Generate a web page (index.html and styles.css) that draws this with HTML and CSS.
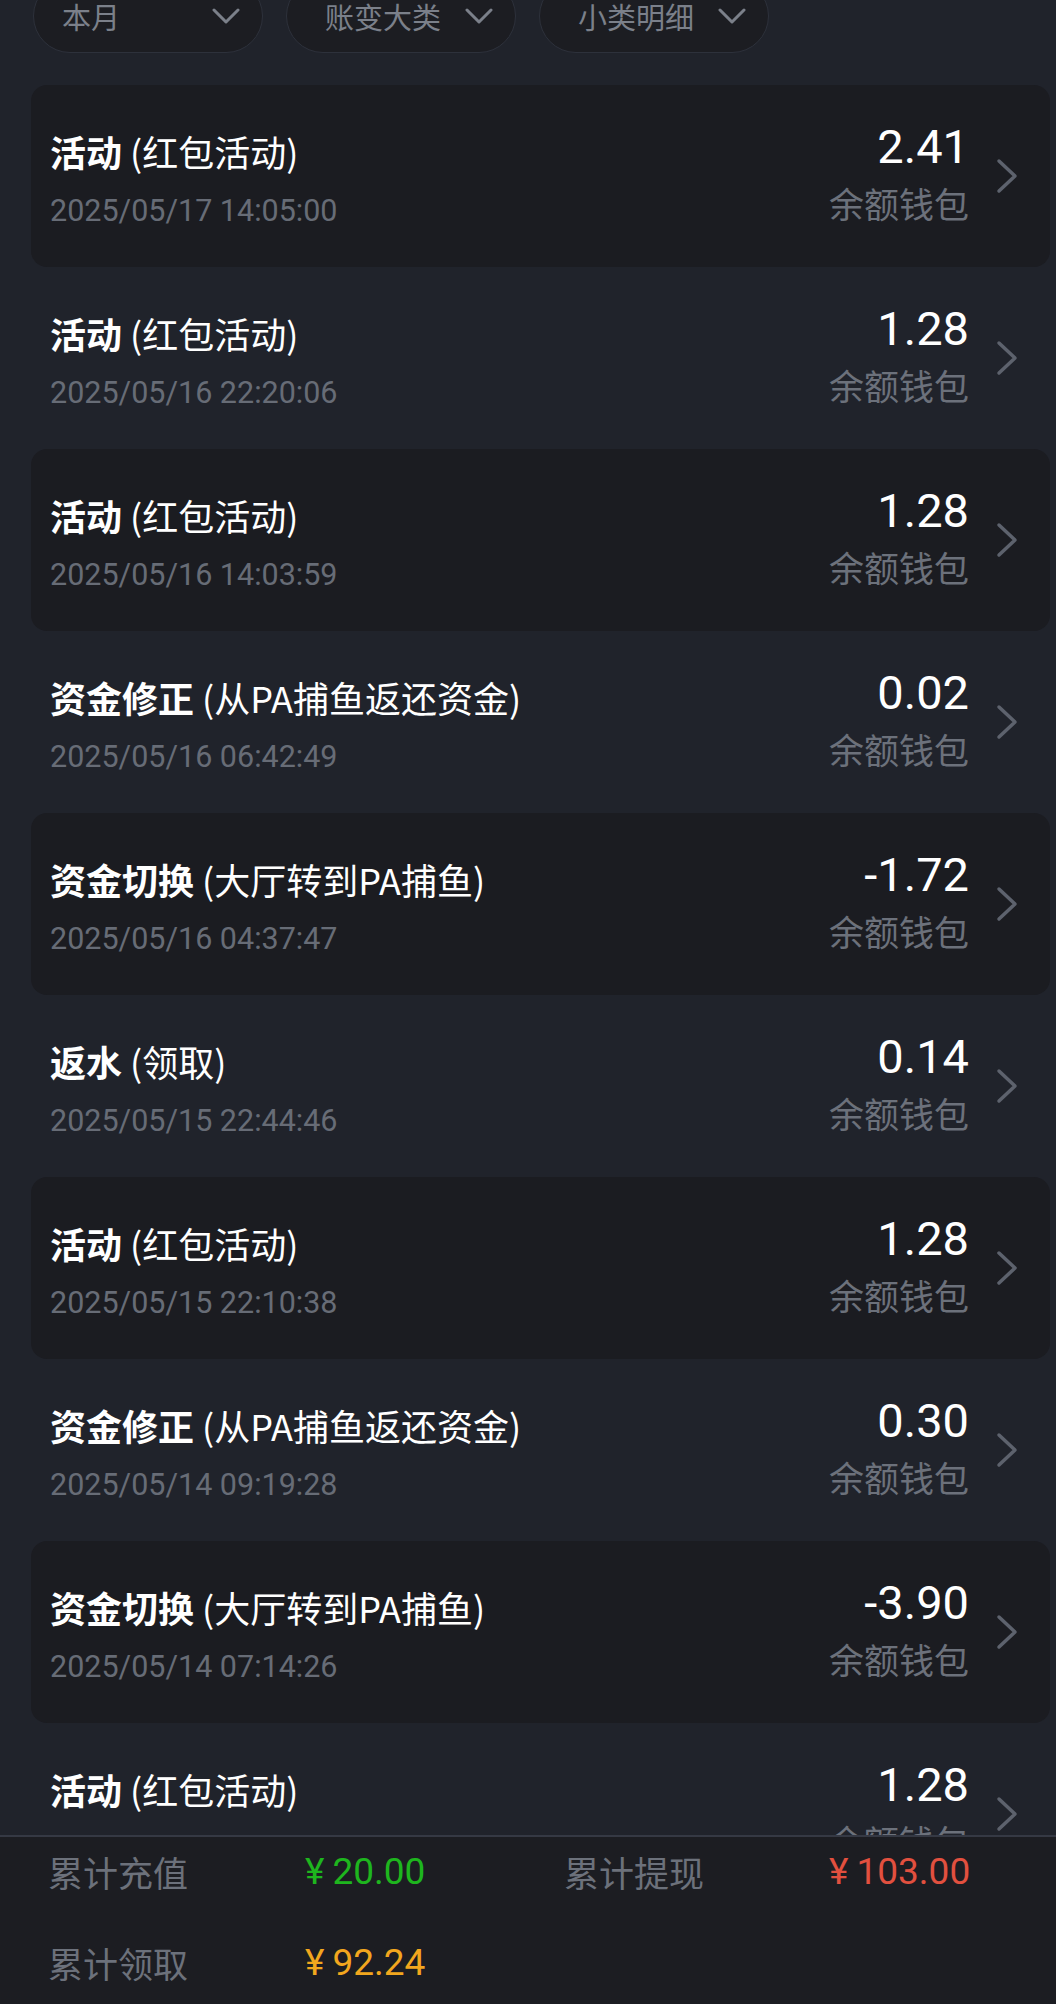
FILE: index.html
```html
<!DOCTYPE html>
<html lang="zh-CN">
<head>
<meta charset="utf-8">
<title>账变记录</title>
<link rel="stylesheet" href="styles.css">
</head>
<body>
<div class="page">
  <div class="filters">
    <div class="pill pill-short"><span class="pill-text">本月</span>
      <svg class="pill-chev" width="28" height="16" viewBox="0 0 28 16"><polyline points="2,2 14,14 26,2" /></svg></div>
    <div class="pill"><span class="pill-text">账变大类</span>
      <svg class="pill-chev" width="28" height="16" viewBox="0 0 28 16"><polyline points="2,2 14,14 26,2" /></svg></div>
    <div class="pill"><span class="pill-text">小类明细</span>
      <svg class="pill-chev" width="28" height="16" viewBox="0 0 28 16"><polyline points="2,2 14,14 26,2" /></svg></div>
  </div>

  <div class="list">
    <div class="row card">
      <div class="info"><div class="title"><b>活动</b> (红包活动)</div><div class="date">2025/05/17 14:05:00</div></div>
      <div class="money"><div class="amount">2.41</div><div class="wallet">余额钱包</div></div>
      <svg class="chev" width="22" height="36" viewBox="0 0 22 36"><polyline points="3,3 19,18 3,33" /></svg>
    </div>
    <div class="row">
      <div class="info"><div class="title"><b>活动</b> (红包活动)</div><div class="date">2025/05/16 22:20:06</div></div>
      <div class="money"><div class="amount">1.28</div><div class="wallet">余额钱包</div></div>
      <svg class="chev" width="22" height="36" viewBox="0 0 22 36"><polyline points="3,3 19,18 3,33" /></svg>
    </div>
    <div class="row card">
      <div class="info"><div class="title"><b>活动</b> (红包活动)</div><div class="date">2025/05/16 14:03:59</div></div>
      <div class="money"><div class="amount">1.28</div><div class="wallet">余额钱包</div></div>
      <svg class="chev" width="22" height="36" viewBox="0 0 22 36"><polyline points="3,3 19,18 3,33" /></svg>
    </div>
    <div class="row">
      <div class="info"><div class="title"><b>资金修正</b> (从PA捕鱼返还资金)</div><div class="date">2025/05/16 06:42:49</div></div>
      <div class="money"><div class="amount">0.02</div><div class="wallet">余额钱包</div></div>
      <svg class="chev" width="22" height="36" viewBox="0 0 22 36"><polyline points="3,3 19,18 3,33" /></svg>
    </div>
    <div class="row card">
      <div class="info"><div class="title"><b>资金切换</b> (大厅转到PA捕鱼)</div><div class="date">2025/05/16 04:37:47</div></div>
      <div class="money"><div class="amount">-1.72</div><div class="wallet">余额钱包</div></div>
      <svg class="chev" width="22" height="36" viewBox="0 0 22 36"><polyline points="3,3 19,18 3,33" /></svg>
    </div>
    <div class="row">
      <div class="info"><div class="title"><b>返水</b> (领取)</div><div class="date">2025/05/15 22:44:46</div></div>
      <div class="money"><div class="amount">0.14</div><div class="wallet">余额钱包</div></div>
      <svg class="chev" width="22" height="36" viewBox="0 0 22 36"><polyline points="3,3 19,18 3,33" /></svg>
    </div>
    <div class="row card">
      <div class="info"><div class="title"><b>活动</b> (红包活动)</div><div class="date">2025/05/15 22:10:38</div></div>
      <div class="money"><div class="amount">1.28</div><div class="wallet">余额钱包</div></div>
      <svg class="chev" width="22" height="36" viewBox="0 0 22 36"><polyline points="3,3 19,18 3,33" /></svg>
    </div>
    <div class="row">
      <div class="info"><div class="title"><b>资金修正</b> (从PA捕鱼返还资金)</div><div class="date">2025/05/14 09:19:28</div></div>
      <div class="money"><div class="amount">0.30</div><div class="wallet">余额钱包</div></div>
      <svg class="chev" width="22" height="36" viewBox="0 0 22 36"><polyline points="3,3 19,18 3,33" /></svg>
    </div>
    <div class="row card">
      <div class="info"><div class="title"><b>资金切换</b> (大厅转到PA捕鱼)</div><div class="date">2025/05/14 07:14:26</div></div>
      <div class="money"><div class="amount">-3.90</div><div class="wallet">余额钱包</div></div>
      <svg class="chev" width="22" height="36" viewBox="0 0 22 36"><polyline points="3,3 19,18 3,33" /></svg>
    </div>
    <div class="row">
      <div class="info"><div class="title"><b>活动</b> (红包活动)</div><div class="date">2025/05/14 06:58:12</div></div>
      <div class="money"><div class="amount">1.28</div><div class="wallet">余额钱包</div></div>
      <svg class="chev" width="22" height="36" viewBox="0 0 22 36"><polyline points="3,3 19,18 3,33" /></svg>
    </div>
  </div>

  <div class="footer">
    <div class="f-label">累计充值</div><div class="f-value green">¥<span class="f-num">20.00</span></div>
    <div class="f-label">累计提现</div><div class="f-value red">¥<span class="f-num">103.00</span></div>
    <div class="f-label">累计领取</div><div class="f-value yellow">¥<span class="f-num">92.24</span></div>
  </div>
</div>
</body>
</html>
```

FILE: styles.css
```css
* { box-sizing: border-box; }
html, body { margin: 0; padding: 0; }
body {
  background: #20232b;
  font-family: Roboto, "Noto Sans CJK SC", sans-serif;
  color: #ffffff;
}
.page {
  height: 2004px;
  display: flex;
  flex-direction: column;
  overflow: hidden;
}
.filters {
  display: flex;
  gap: 23px;
  margin-top: -21px;
  padding-left: 33px;
  flex: none;
}
.pill {
  width: 230px;
  height: 74px;
  border-radius: 37px;
  border: 1.5px solid #2d313b;
  background: #1c1d22;
  display: flex;
  align-items: center;
  padding: 0 22px 0 38px;
}
.pill-short { padding-left: 28px; }
.pill-text {
  font-family: "Noto Sans CJK SC", sans-serif;
  font-size: 29px;
  color: #7b808a;
  line-height: 40px;
}
.pill-chev {
  margin-left: auto;
  fill: none;
  stroke: #7b808a;
  stroke-width: 3;
  stroke-linecap: round;
  stroke-linejoin: round;
}
.list {
  flex: 1;
  overflow: hidden;
  margin-top: 32px;
  padding: 0 6px 0 31px;
}
.row {
  height: 182px;
  display: flex;
  align-items: flex-start;
  padding: 0 32px 0 19px;
  border-radius: 16px;
}
.row.card { background: #1b1c21; }
.info {
  margin-top: 42px;
  flex: 1;
}
.title {
  font-size: 36px;
  line-height: 48px;
  color: #ffffff;
  font-family: "Noto Sans CJK SC", sans-serif;
}
.title b { font-weight: 700; }
.date {
  margin-top: 16px;
  font-size: 30.5px;
  line-height: 40px;
  color: #676c76;
}
.money {
  margin-top: 34px;
  text-align: right;
}
.amount {
  font-size: 47px;
  line-height: 56px;
  color: #ffffff;
}
.wallet {
  margin-top: 6px;
  font-family: "Noto Sans CJK SC", sans-serif;
  font-size: 35px;
  line-height: 44px;
  color: #6c717b;
}
.chev {
  align-self: center;
  margin-left: 27px;
  fill: none;
  stroke: #5d626d;
  stroke-width: 3.5;
  stroke-linecap: round;
  stroke-linejoin: round;
}
.footer {
  flex: none;
  height: 169px;
  background: #1c1d22;
  border-top: 2px solid #353944;
  display: grid;
  grid-template-columns: 257px 259px 265px 1fr;
  grid-auto-rows: 46px;
  row-gap: 45px;
  padding: 12px 0 0 48px;
  align-items: center;
}
.f-label {
  font-family: "Noto Sans CJK SC", sans-serif;
  font-size: 35px;
  color: #6c717b;
  line-height: 46px;
}
.f-value {
  font-size: 37px;
  line-height: 46px;
}
.f-num { margin-left: 8px; }
.green { color: #1eb51e; }
.red { color: #e2503f; }
.yellow { color: #f2a71e; }
```
